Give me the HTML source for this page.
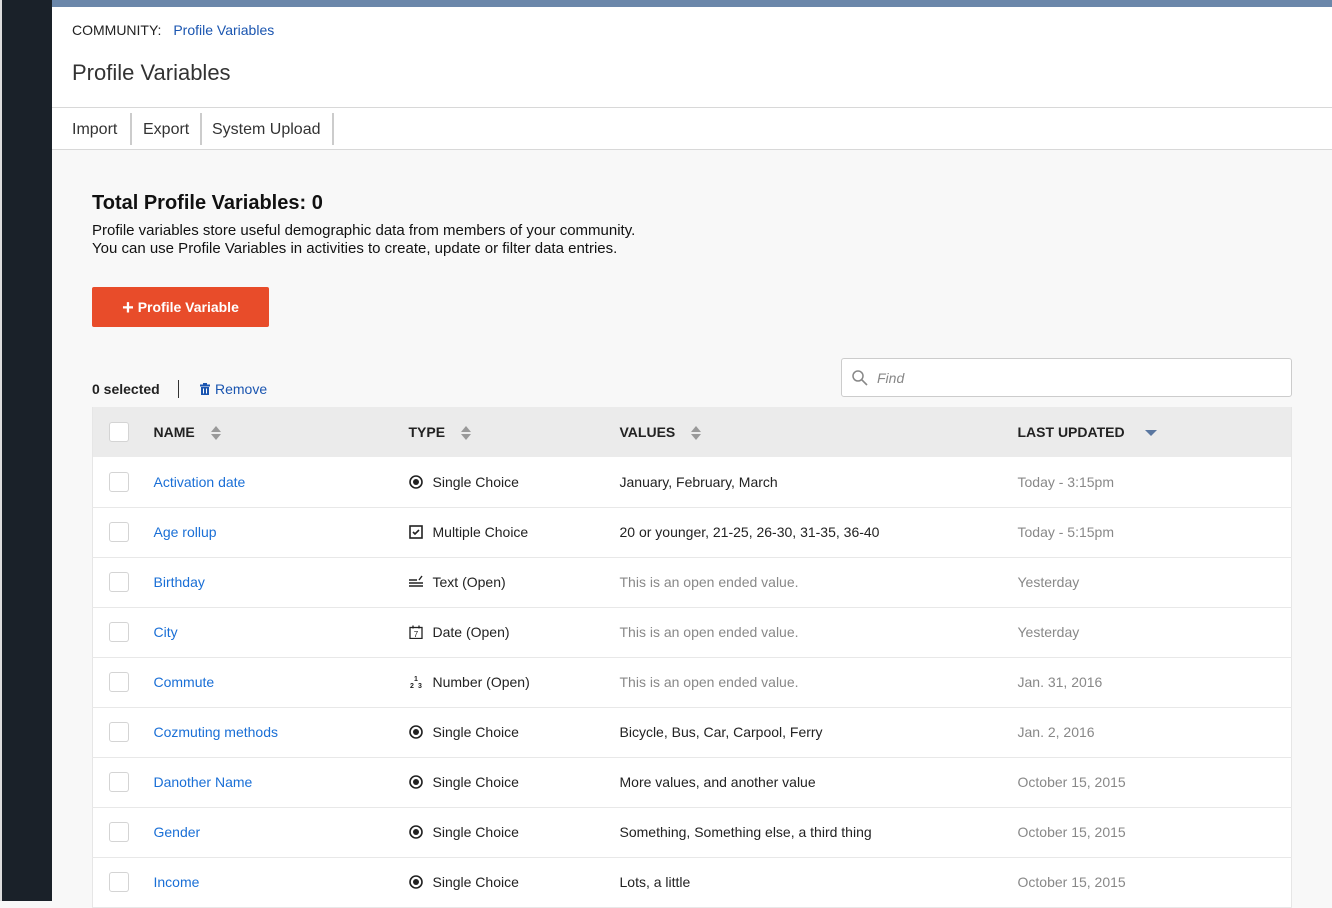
<!DOCTYPE html>
<html><head><meta charset="utf-8"><style>
*{box-sizing:border-box;margin:0;padding:0}
body{width:1332px;height:901px;overflow:hidden;background:#f8f8f8;font-family:"Liberation Sans",Arial,sans-serif;color:#222;position:relative}
.side{position:absolute;left:0;top:0;width:52px;height:901px;background:#1a2129;border-left:2px solid #ddd}
.topbar{position:absolute;left:52px;top:0;right:0;height:7px;background:#6b87aa}
.head{position:absolute;left:52px;top:7px;right:0;height:101px;background:#fff;border-bottom:1px solid #d8d8d8}
.crumb{position:absolute;left:20px;top:15px;font-size:14px;color:#222}
.crumb a{color:#1a55b0;margin-left:8px}
.title{position:absolute;left:20px;top:53px;font-size:22px;color:#333}
.tabs{position:absolute;left:52px;top:108px;right:0;height:42px;background:#fff;border-bottom:1px solid #d8d8d8}
.tabs span{position:absolute;top:13px;font-size:16px;color:#333}
.tabs i{position:absolute;top:5px;width:2px;height:32px;background:#ccc}
h2{position:absolute;left:92px;top:192px;font-size:20px;font-weight:bold;color:#111}
.desc{position:absolute;left:92px;top:222px;font-size:15px;line-height:18px;color:#111}
.btn{position:absolute;left:92px;top:287px;width:177px;height:40px;background:#e84c2a;border-radius:2px;color:#fff;font-weight:bold;font-size:14px;text-align:center;line-height:40px}
.sel{position:absolute;left:92px;top:381px;font-size:14px;font-weight:bold}
.bar{position:absolute;left:178px;top:380px;width:1px;height:18px;background:#333}
.rem{position:absolute;left:200px;top:381px;font-size:14px;color:#1a55b0}
.find{position:absolute;left:841px;top:358px;width:451px;height:39px;background:#fff;border:1px solid #ccc;border-radius:3px}
.find span{position:absolute;left:35px;top:11px;font-style:italic;color:#888;font-size:14px}
table{position:absolute;left:92px;top:407px;width:1200px;border-collapse:collapse;font-size:14px;border-left:1px solid #e6e6e6;border-right:1px solid #e6e6e6}
th{height:50px;background:#ebebeb;text-align:left;font-size:14px;font-weight:bold;color:#222}
td{height:50px;background:#fff;border-bottom:1px solid #e8e8e8}
.cb{display:inline-block;width:20px;height:20px;border:1px solid #d4d4d4;border-radius:3px;background:#fff;vertical-align:middle}
.n{color:#1a6fd6}
.g{color:#888}
.sort{display:inline-block;margin-left:16px;vertical-align:middle;width:10px;height:14px;position:relative}
.sort:before{content:"";position:absolute;top:0;left:0;border:5px solid transparent;border-top:0;border-bottom:6px solid #999}
.sort:after{content:"";position:absolute;bottom:0;left:0;border:5px solid transparent;border-bottom:0;border-top:6px solid #999}
.ic{display:inline-block;width:14px;margin-right:10px;vertical-align:-2px}
</style></head><body>
<div class="side"></div><div class="topbar"></div>
<div class="head"><div class="crumb">COMMUNITY: <a>Profile Variables</a></div><div class="title">Profile Variables</div></div>
<div class="tabs"><span style="left:20px">Import</span><i style="left:78px"></i><span style="left:91px">Export</span><i style="left:148px"></i><span style="left:160px">System Upload</span><i style="left:280px"></i></div>
<h2>Total Profile Variables: 0</h2>
<div class="desc">Profile variables store useful demographic data from members of your community.<br>You can use Profile Variables in activities to create, update or filter data entries.</div>
<div class="btn"><span style="font-size:20px;vertical-align:-2px">+</span> Profile Variable</div>
<div class="sel">0 selected</div><div class="bar"></div>
<div class="rem"><svg width="10" height="12" viewBox="0 0 10 12" style="vertical-align:-1px;margin-right:5px"><rect x="0" y="1.5" width="10" height="2" fill="#1a55b0"/><rect x="3" y="0" width="4" height="2" fill="#1a55b0"/><path d="M1 4h8v8H1z" fill="#1a55b0"/><path d="M3.5 5.5v5M6.5 5.5v5" stroke="#fff"/></svg>Remove</div>
<div class="find"><svg width="16" height="16" viewBox="0 0 16 16" style="position:absolute;left:10px;top:11px"><circle cx="6" cy="6" r="5" fill="none" stroke="#888" stroke-width="1.5"/><path d="M10 10l5 5" stroke="#888" stroke-width="1.6"/></svg><span>Find</span></div>
<table>
<tr><th style="width:61px;padding-left:16px"><span class="cb"></span></th><th style="width:255px">NAME<span class="sort"></span></th><th style="width:211px">TYPE<span class="sort"></span></th><th style="width:398px">VALUES<span class="sort"></span></th><th>LAST UPDATED<span style="display:inline-block;margin-left:20px;border:6px solid transparent;border-bottom:0;border-top:6px solid #5a77a0;vertical-align:middle"></span></th></tr>
<tr><td style="padding-left:16px"><span class="cb"></span></td><td class="n">Activation date</td><td><svg class="ic" width="14" height="14" viewBox="0 0 14 14"><circle cx="7" cy="7" r="6" fill="none" stroke="#222" stroke-width="1.6"/><circle cx="7" cy="7" r="3" fill="#222"/></svg>Single Choice</td><td>January, February, March</td><td class="g">Today - 3:15pm</td></tr>
<tr><td style="padding-left:16px"><span class="cb"></span></td><td class="n">Age rollup</td><td><svg class="ic" width="14" height="14" viewBox="0 0 14 14"><rect x="1" y="1" width="12" height="12" fill="none" stroke="#222" stroke-width="1.6"/><path d="M4 7l2 2 4-4" fill="none" stroke="#222" stroke-width="1.6"/></svg>Multiple Choice</td><td>20 or younger, 21-25, 26-30, 31-35, 36-40</td><td class="g">Today - 5:15pm</td></tr>
<tr><td style="padding-left:16px"><span class="cb"></span></td><td class="n">Birthday</td><td><svg class="ic" width="14" height="14" viewBox="0 0 14 14"><path d="M0 5h8M0 8h14M0 11h14" stroke="#222" stroke-width="1.6"/><path d="M10 5l3-4" stroke="#222" stroke-width="1.4"/></svg>Text (Open)</td><td class="g">This is an open ended value.</td><td class="g">Yesterday</td></tr>
<tr><td style="padding-left:16px"><span class="cb"></span></td><td class="n">City</td><td><svg class="ic" width="14" height="14" viewBox="0 0 14 14"><rect x="1" y="2.5" width="12" height="11" fill="none" stroke="#222" stroke-width="1.3"/><path d="M4 0.5v3M10 0.5v3" stroke="#222" stroke-width="1.3"/><text x="7" y="12" font-size="8" text-anchor="middle" fill="#222" font-family="Liberation Sans">7</text></svg>Date (Open)</td><td class="g">This is an open ended value.</td><td class="g">Yesterday</td></tr>
<tr><td style="padding-left:16px"><span class="cb"></span></td><td class="n">Commute</td><td><svg class="ic" width="14" height="14" viewBox="0 0 14 14"><text x="7" y="6" font-size="7" font-weight="bold" text-anchor="middle" fill="#222" font-family="Liberation Sans">1</text><text x="3" y="13" font-size="7" font-weight="bold" text-anchor="middle" fill="#222" font-family="Liberation Sans">2</text><text x="11" y="13" font-size="7" font-weight="bold" text-anchor="middle" fill="#222" font-family="Liberation Sans">3</text></svg>Number (Open)</td><td class="g">This is an open ended value.</td><td class="g">Jan. 31, 2016</td></tr>
<tr><td style="padding-left:16px"><span class="cb"></span></td><td class="n">Cozmuting methods</td><td><svg class="ic" width="14" height="14" viewBox="0 0 14 14"><circle cx="7" cy="7" r="6" fill="none" stroke="#222" stroke-width="1.6"/><circle cx="7" cy="7" r="3" fill="#222"/></svg>Single Choice</td><td>Bicycle, Bus, Car, Carpool, Ferry</td><td class="g">Jan. 2, 2016</td></tr>
<tr><td style="padding-left:16px"><span class="cb"></span></td><td class="n">Danother Name</td><td><svg class="ic" width="14" height="14" viewBox="0 0 14 14"><circle cx="7" cy="7" r="6" fill="none" stroke="#222" stroke-width="1.6"/><circle cx="7" cy="7" r="3" fill="#222"/></svg>Single Choice</td><td>More values, and another value</td><td class="g">October 15, 2015</td></tr>
<tr><td style="padding-left:16px"><span class="cb"></span></td><td class="n">Gender</td><td><svg class="ic" width="14" height="14" viewBox="0 0 14 14"><circle cx="7" cy="7" r="6" fill="none" stroke="#222" stroke-width="1.6"/><circle cx="7" cy="7" r="3" fill="#222"/></svg>Single Choice</td><td>Something, Something else, a third thing</td><td class="g">October 15, 2015</td></tr>
<tr><td style="padding-left:16px"><span class="cb"></span></td><td class="n">Income</td><td><svg class="ic" width="14" height="14" viewBox="0 0 14 14"><circle cx="7" cy="7" r="6" fill="none" stroke="#222" stroke-width="1.6"/><circle cx="7" cy="7" r="3" fill="#222"/></svg>Single Choice</td><td>Lots, a little</td><td class="g">October 15, 2015</td></tr>
</table>
</body></html>
